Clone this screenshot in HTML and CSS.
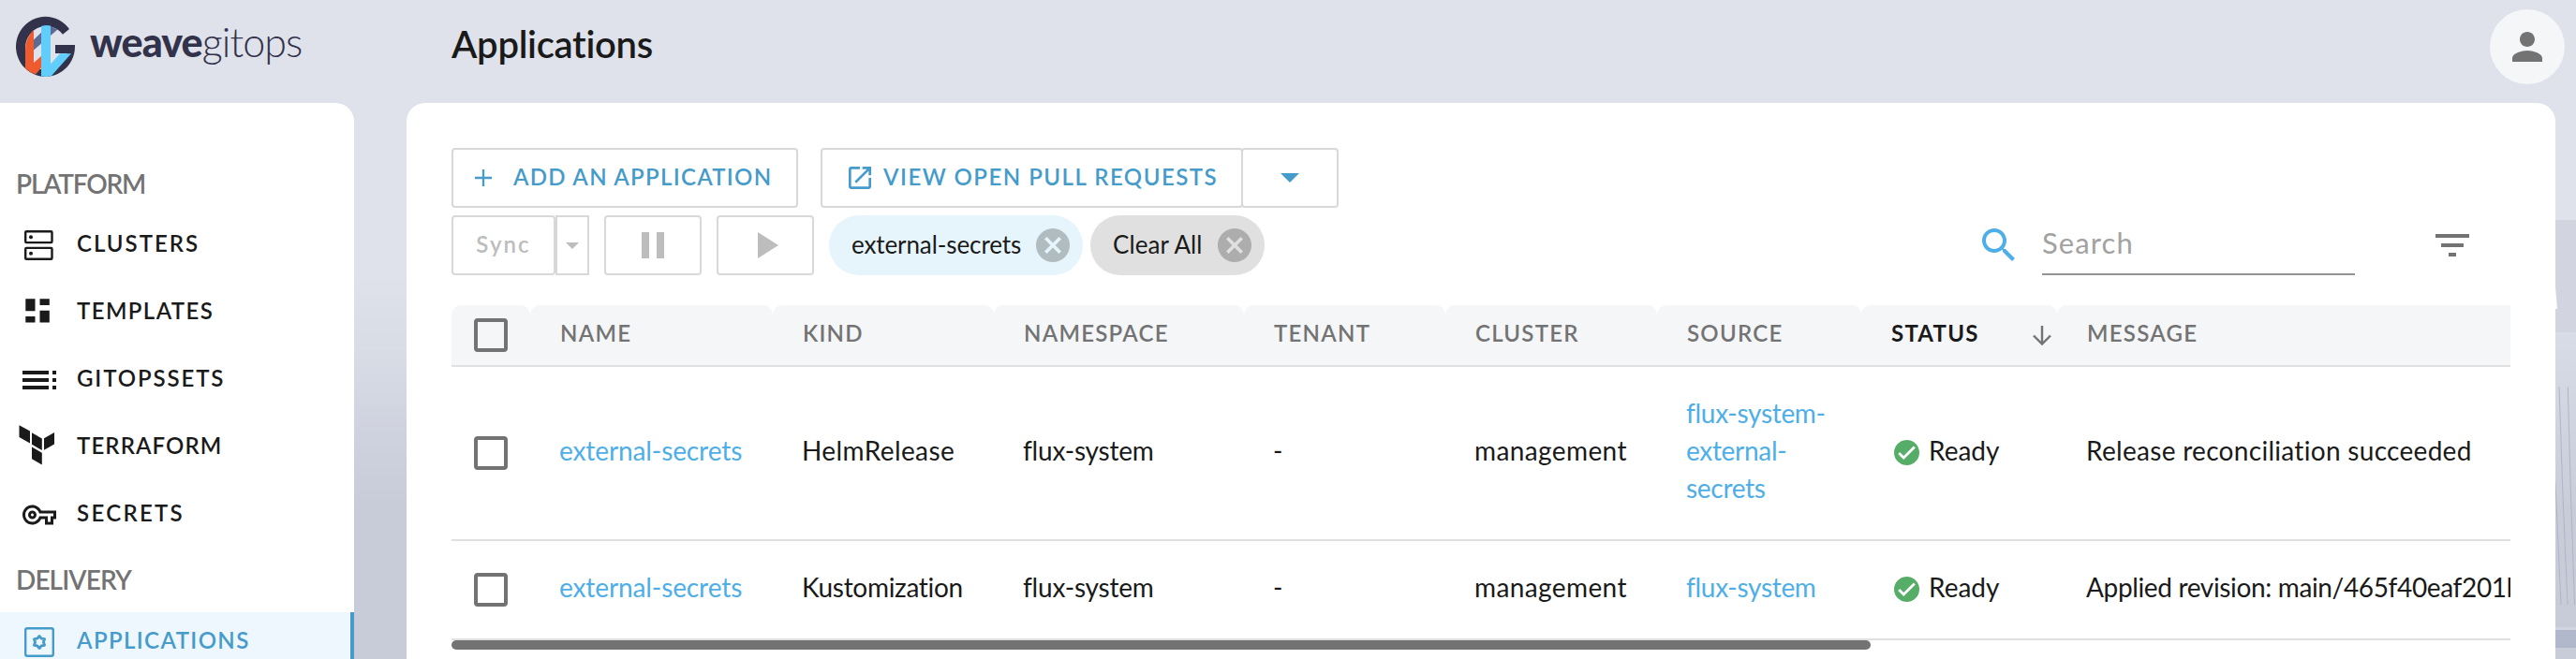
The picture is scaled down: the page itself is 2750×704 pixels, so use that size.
FILE: index.html
```html
<!DOCTYPE html>
<html lang="en">
<head>
<meta charset="utf-8">
<title>Weave GitOps - Applications</title>
<link rel="stylesheet" href="styles.css">
</head>
<body>
<svg class="backdrop" viewBox="0 0 24 704" aria-hidden="true">
  <defs>
    <linearGradient id="fade" x1="0" y1="0" x2="0" y2="1">
      <stop offset="0" stop-color="#d8dce6"/>
      <stop offset="1" stop-color="#c9cdda"/>
    </linearGradient>
  </defs>
  <rect x="0" y="235" width="24" height="120" fill="#d2d5e0"/>
  <rect x="0" y="355" width="24" height="185" fill="url(#fade)"/>
  <path d="M2 307 L4 330 L2 330Z" fill="#fff"/>
  <path d="M6 413 L10 530 15 646 M15.300 413 L18.500 530 22.500 646 M2 515 L8 646" stroke="#b0b5c6" fill="none"/>
  <rect x="0" y="670" width="24" height="4" fill="#d1d5df"/>
  <rect x="0" y="673" width="24" height="19" fill="#b2b8cb"/>
</svg>

<header class="topbar">
  <div class="brand">
    <svg class="brand-mark" viewBox="17 17 64 66">
      <path d="M74 31 A31.500 32 0 1 0 80 50 V48 H59 V57 H72 L54 74 H36 C29.500 67 27 60 27 50 A22.500 23.500 0 0 1 67 36.700Z" fill="#32324b"/>
      <path d="M36 32 C30 38 27 45 27 54 V73 Q31.500 77.500 38 79.500 L44 72.500 V60 L36 67Z" fill="#ef5b2f"/>
      <path d="M36 42.500 L51 28 Q57 28.500 61.500 31.500 L36 53.500Z" fill="#5d6b92"/>
      <path d="M44 28 Q49 26.500 54 27.500 V68.500 L64 57.300 H76 L54.500 81.600 Q49 82.200 44 81.500Z" fill="#60cdfb"/>
    </svg>
    <span class="brand-strong">weave</span><span class="brand-light">gitops</span>
  </div>
  <h1 class="page-title">Applications</h1>
  <button class="avatar" aria-label="Account">
    <svg viewBox="0 0 24 24"><path d="M12 12c2.210 0 4-1.790 4-4s-1.790-4-4-4-4 1.790-4 4 1.790 4 4 4zm0 2c-2.670 0-8 1.340-8 4v2h16v-2c0-2.660-5.330-4-8-4z"/></svg>
  </button>
</header>

<div class="shell">
  <nav class="sidebar">
    <h2 class="nav-heading">PLATFORM</h2>
    <ul class="nav-list">
      <li class="nav-item">
        <svg viewBox="0 0 48 48"><g fill="none" stroke="currentColor" stroke-width="2.400"><rect x="9.200" y="9.200" width="28.300" height="11.900" rx="1"/><rect x="9.200" y="26.900" width="28.300" height="11.900" rx="1"/></g><circle cx="15" cy="15.300" r="2" fill="currentColor"/><circle cx="15" cy="32.800" r="2" fill="currentColor"/></svg>
        <span class="nav-label nav-clusters">CLUSTERS</span>
      </li>
      <li class="nav-item">
        <svg viewBox="0 0 48 48" fill="currentColor"><path d="M9.300 9.300h10.200v13H9.300zM9.300 28h10.200v6.500H9.300zM24.500 9.300h10.300v6.700H24.500zM24.500 21.700h10.300v12.800H24.500z"/></svg>
        <span class="nav-label nav-templates">TEMPLATES</span>
      </li>
      <li class="nav-item">
        <svg viewBox="0 0 48 48" fill="currentColor"><path d="M6 14h28v4H6zM6 22h28v4H6zM6 30h28v4H6zM38 14h4v4h-4zM38 22h4v4h-4zM38 30h4v4h-4z"/></svg>
        <span class="nav-label nav-gitopssets">GITOPSSETS</span>
      </li>
      <li class="nav-item">
        <svg viewBox="0 0 48 48" fill="currentColor"><path d="M2.500 .300L14 6.600V19.500L2.500 13zM16 8.200L26.800 14.400V27L16 20.700zM29 14.300L40 8V20.500L29 26.700zM16 23.400L26.800 29.700V42.600L16 36.200z"/></svg>
        <span class="nav-label nav-terraform">TERRAFORM</span>
      </li>
      <li class="nav-item">
        <svg viewBox="0 0 48 48" fill="currentColor"><path transform="translate(6 6) scale(1.500)" d="M22 19h-6v-4h-2.680c-1.140 2.420-3.600 4-6.320 4-3.860 0-7-3.140-7-7s3.140-7 7-7c2.720 0 5.170 1.580 6.320 4H24v6h-2v4zm-4-2h2v-4h2v-2H11.940l-.230-.670C11.010 8.340 9.110 7 7 7c-2.760 0-5 2.240-5 5s2.240 5 5 5c2.110 0 4.010-1.340 4.710-3.330l.230-.670H18v4zM7 15c-1.650 0-3-1.350-3-3s1.350-3 3-3 3 1.350 3 3-1.350 3-3 3zm0-4c-.550 0-1 .450-1 1s.450 1 1 1 1-.450 1-1-.450-1-1-1z"/></svg>
        <span class="nav-label nav-secrets">SECRETS</span>
      </li>
    </ul>
    <h2 class="nav-heading nav-heading-delivery">DELIVERY</h2>
    <ul class="nav-list">
      <li class="nav-item nav-item-active">
        <svg viewBox="0 0 48 48" fill="none" stroke="currentColor"><rect x="9.200" y="9.200" width="29.600" height="29.600" rx="2" stroke-width="2.400"/><path d="M24 17.500L26.200 20.200 29.600 20.700 28.400 24 29.600 27.300 26.200 27.800 24 30.500 21.800 27.800 18.400 27.300 19.600 24 18.400 20.700 21.800 20.200z" stroke-width="2.800" stroke-linejoin="round"/></svg>
        <span class="nav-label nav-applications">APPLICATIONS</span>
      </li>
    </ul>
  </nav>

  <main class="panel">
    <div class="actions">
      <button class="btn btn-add">
        <svg class="icon-plus" viewBox="0 0 18 18"><path d="M9 0v18M0 9h18" stroke="currentColor" stroke-width="2.300"/></svg>
        <span class="text-add">ADD AN APPLICATION</span>
      </button>
      <div class="btn-group">
        <button class="btn btn-view">
          <svg class="icon-open" viewBox="3 3 18 18" fill="currentColor"><path d="M19 19H5V5h7V3H5c-1.110 0-2 .900-2 2v14c0 1.100.890 2 2 2h14c1.100 0 2-.900 2-2v-7h-2v7zM14 3v2h3.590l-9.830 9.830 1.410 1.410L19 6.410V10h2V3h-7z"/></svg>
          <span class="text-view">VIEW OPEN PULL REQUESTS</span>
        </button>
        <button class="btn btn-view-more" aria-label="More">
          <svg class="icon-caret" viewBox="0 0 20 10"><path d="M0 0h20L10 10z" fill="currentColor"/></svg>
        </button>
      </div>
    </div>

    <div class="filters">
      <div class="sync-group">
        <button class="btn btn-muted btn-sync"><span>Sync</span></button>
        <button class="btn btn-muted btn-sync-more" aria-label="Sync options"><svg viewBox="0 0 14 7"><path d="M0 0h14L7 7z" fill="currentColor"/></svg></button>
      </div>
      <button class="btn btn-muted btn-square" aria-label="Suspend"><svg viewBox="0 0 48 48" fill="currentColor"><path d="M12 10h8v28h-8zM28 10h8v28h-8z"/></svg></button>
      <button class="btn btn-muted btn-square" aria-label="Resume"><svg viewBox="0 0 48 48" fill="currentColor"><path d="M16 10v28l22-14z"/></svg></button>
      <div class="chips">
        <div class="chip chip-filter"><span class="text-chip-filter">external-secrets</span>
          <svg viewBox="2 2 20 20"><path d="M12 2C6.470 2 2 6.470 2 12s4.470 10 10 10 10-4.470 10-10S17.530 2 12 2zm5 13.590L15.590 17 12 13.410 8.410 17 7 15.590 10.590 12 7 8.410 8.410 7 12 10.590 15.590 7 17 8.410 13.410 12 17 15.590z"/></svg>
        </div>
        <div class="chip chip-clear"><span class="text-chip-clear">Clear All</span>
          <svg viewBox="2 2 20 20"><path d="M12 2C6.470 2 2 6.470 2 12s4.470 10 10 10 10-4.470 10-10S17.530 2 12 2zm5 13.590L15.590 17 12 13.410 8.410 17 7 15.590 10.590 12 7 8.410 8.410 7 12 10.590 15.590 7 17 8.410 13.410 12 17 15.590z"/></svg>
        </div>
      </div>
      <div class="search">
        <svg class="icon-search" viewBox="0 0 24 24"><path d="M15.500 14h-.790l-.280-.270C15.410 12.590 16 11.110 16 9.500 16 5.910 13.090 3 9.500 3S3 5.910 3 9.500 5.910 16 9.500 16c1.610 0 3.090-.590 4.230-1.570l.270.280v.790l5 4.990L20.490 19l-4.990-5zm-6 0C7.010 14 5 11.990 5 9.500S7.010 5 9.500 5 14 7.010 14 9.500 11.990 14 9.500 14z"/></svg>
        <div class="search-field">Search</div>
        <svg class="icon-filter" viewBox="0 0 24 24"><path d="M10 18h4v-2h-4v2zM3 6v2h18V6H3zm3 7h12v-2H6v2z"/></svg>
      </div>
    </div>

    <div class="table-scroll">
      <table class="grid">
        <colgroup><col class="c-check"><col class="c-name"><col class="c-kind"><col class="c-ns"><col class="c-tenant"><col class="c-cluster"><col class="c-source"><col class="c-status"><col class="c-message"></colgroup>
        <thead>
          <tr>
            <th><span class="checkbox"></span></th>
            <th>NAME</th>
            <th>KIND</th>
            <th>NAMESPACE</th>
            <th>TENANT</th>
            <th>CLUSTER</th>
            <th>SOURCE</th>
            <th class="sorted"><div class="sort"><span>STATUS</span><svg viewBox="0 0 20 21"><path d="M10 0v19M1 10.500l9 9 9-9" fill="none" stroke="#737373" stroke-width="2.400"/></svg></div></th>
            <th>MESSAGE</th>
          </tr>
        </thead>
        <tbody>
          <tr class="row-tall">
            <td><span class="checkbox"></span></td>
            <td class="link name">external-secrets</td>
            <td class="kind">HelmRelease</td>
            <td class="ns">flux-system</td>
            <td>-</td>
            <td class="cluster">management</td>
            <td class="link source">flux-system-<br>external-<br>secrets</td>
            <td><div class="status"><svg viewBox="0 0 27 27"><circle cx="13.500" cy="13.500" r="13.500" fill="#56ad68"/><path d="M5.200 14l5 5L21.800 7.500" fill="none" stroke="#fff" stroke-width="2.800"/></svg><span>Ready</span></div></td>
            <td class="message">Release reconciliation succeeded</td>
          </tr>
          <tr class="row-short">
            <td><span class="checkbox"></span></td>
            <td class="link name">external-secrets</td>
            <td class="kind-k">Kustomization</td>
            <td class="ns">flux-system</td>
            <td>-</td>
            <td class="cluster">management</td>
            <td class="link source">flux-system</td>
            <td><div class="status"><svg viewBox="0 0 27 27"><circle cx="13.500" cy="13.500" r="13.500" fill="#56ad68"/><path d="M5.200 14l5 5L21.800 7.500" fill="none" stroke="#fff" stroke-width="2.800"/></svg><span>Ready</span></div></td>
            <td class="message-applied">Applied revision: main/465f40eaf201b</td>
          </tr>
        </tbody>
      </table>
      <div class="scrollbar"></div>
    </div>
  </main>
</div>
</body>
</html>
```
FILE: styles.css
```css
* { box-sizing: border-box; }

body {
  margin: 0;
  height: 704px;
  overflow: hidden;
  position: relative;
  background: linear-gradient(#dfe2ea 0, #dfe2ea 290px, #d8dce5 380px, #cdd0dd 480px, #c8ccd9 540px);
  color: #1a1a1a;
  font-family: Lato, "Liberation Sans", sans-serif;
  font-variant-ligatures: none;
}

button { margin: 0; font: inherit; letter-spacing: inherit; }
svg { display: block; flex: none; }

.backdrop { position: absolute; right: 0; top: 0; width: 24px; height: 704px; z-index: -1; }

.topbar { display: flex; align-items: center; height: 110px; padding: 0 12px 10px 17px; }
.brand { display: flex; align-items: center; width: 465px; line-height: 60px; font-size: 43px; color: #32324b; }
.brand-mark { width: 64px; height: 66px; margin-right: 15px; }
.brand-strong { font-weight: 900; letter-spacing: -0.9px; padding-bottom: 11px; line-height: 47px; }
.brand-light { font-weight: 300; letter-spacing: -0.9px; padding-bottom: 11px; line-height: 47px; }
.page-title { flex: 1; margin: 0; padding-bottom: 7px; font-size: 40px; line-height: 48px; font-weight: 600; letter-spacing: -0.3px; }
.avatar { display: flex; align-items: center; justify-content: center; width: 80px; height: 80px; padding: 0; border: 0; border-radius: 50%; background: #f5f6f8; }
.avatar svg { width: 48px; height: 48px; fill: #737373; }

.shell { display: flex; height: 594px; }

.sidebar { width: 378px; padding-top: 66px; background: #fff; border-top-right-radius: 20px; overflow: hidden; }
.nav-heading { margin: 0 0 14px; padding-left: 17px; font-size: 28px; line-height: 40px; font-weight: 600; letter-spacing: -1.2px; color: #737373; }
.nav-heading-delivery { margin: 17px 0 15px; letter-spacing: -0.9px; }
.nav-list { display: flex; flex-direction: column; gap: 8px; margin: 0; padding: 0; list-style: none; }
.nav-item { display: flex; align-items: center; gap: 16px; height: 64px; padding-left: 18px; }
.nav-item svg { width: 48px; height: 48px; }
.nav-item-active { background: #eef6fe; border-right: 4px solid #459bca; color: #459bca; }
.nav-label { padding-bottom: 4px; font-size: 24px; line-height: 30px; font-weight: 600; }
.nav-clusters { letter-spacing: 2px; }
.nav-templates { letter-spacing: 1.4px; }
.nav-gitopssets { letter-spacing: 1.9px; }
.nav-terraform { letter-spacing: 1.1px; }
.nav-secrets { letter-spacing: 2.3px; }
.nav-applications { letter-spacing: 1.4px; }

.panel { display: flex; flex-direction: column; width: 2294px; margin-left: 56px; padding: 48px 48px 0; background: #fff; border-radius: 20px 20px 0 0; }

.actions { display: flex; gap: 24px; margin-bottom: 8px; }
.btn { display: flex; align-items: center; height: 64px; padding: 0; border: 2px solid #d8d8d8; border-radius: 4px; background: #fff; color: #459bca; font-size: 24px; line-height: 30px; font-weight: 600; white-space: nowrap; }
.btn span { padding-bottom: 3px; }
.btn-add { width: 370px; padding-left: 23px; }
.icon-plus { width: 18px; height: 18px; margin-right: 23px; }
.text-add { letter-spacing: 1.3px; }
.btn-group { display: flex; }
.btn-view { width: 451px; padding-left: 28px; }
.icon-open { width: 24px; height: 24px; margin-right: 13px; }
.text-view { letter-spacing: 1.5px; }
.btn-view-more { width: 104px; margin-left: -2px; justify-content: center; padding-left: 0; }
.icon-caret { width: 20px; height: 10px; }

.filters { display: flex; align-items: center; gap: 16px; height: 64px; }
.sync-group { display: flex; }
.btn-muted { color: #bdbdbd; justify-content: center; }
.btn-sync { width: 111px; letter-spacing: 2.1px; }
.btn-sync-more { width: 36px; border-radius: 0; }
.btn-sync-more svg { width: 14px; height: 7px; }
.btn-square { width: 104px; }
.btn-square svg { width: 48px; height: 48px; }

.chips { display: flex; gap: 8px; }
.chip { display: flex; align-items: center; height: 64px; padding-right: 14px; padding-left: 24px; border-radius: 32px; font-size: 26px; line-height: 32px; white-space: nowrap; justify-content: space-between; }
.chip span { padding-bottom: 3px; }
.chip-filter { width: 271px; background: #e6f5fb; }
.chip-clear { width: 186px; background: #e0e0e0; }
.chip svg { width: 36px; height: 36px; fill: rgba(26, 26, 26, 0.26); }
.text-chip-filter { letter-spacing: -0.1px; }
.text-chip-clear { letter-spacing: 0.1px; }

.search { display: flex; align-items: center; margin-left: auto; padding-right: 38px; }
.icon-search { width: 48px; height: 48px; fill: #4eaee8; }
.search-field { width: 334px; height: 64px; margin: 0 80px 0 22px; border-bottom: 2px solid #949494; font-size: 31px; line-height: 58px; letter-spacing: 1.1px; color: #a2a2a2; }
.icon-filter { width: 48px; height: 48px; fill: #737373; }

.table-scroll { margin-top: 32px; overflow: hidden; }
.grid { width: 3000px; table-layout: fixed; border-collapse: separate; border-spacing: 0; font-size: 28px; line-height: 40px; white-space: nowrap; }
.c-check { width: 84px; }
.c-name { width: 259px; }
.c-kind { width: 236px; }
.c-ns { width: 267px; }
.c-tenant { width: 215px; }
.c-cluster { width: 226px; }
.c-source { width: 218px; }
.c-status { width: 209px; }
.c-message { width: 1286px; }

.grid th { height: 66px; padding: 0 0 4px 32px; background: #f5f6f8; background-clip: padding-box; border-bottom: 2px solid #e0e0e0; border-radius: 10px 10px 0 0; text-align: left; font-size: 24px; line-height: 30px; font-weight: 600; letter-spacing: 1.25px; color: #737373; }
.grid th.sorted { color: #1a1a1a; font-weight: 700; }
.sort { display: flex; align-items: center; justify-content: space-between; padding-right: 6px; }
.sort svg { width: 20px; height: 21px; margin-top: 4px; }

.grid td { padding: 0 0 6px 31px; border-bottom: 2px solid #e0e0e0; }
.grid th:first-child, .grid td:first-child { padding: 0 0 0 24px; }
.row-tall td { height: 186px; }
.row-short td { height: 106px; }
.checkbox { display: block; width: 36px; height: 36px; border: 4px solid #737373; border-radius: 4px; }
.link { color: #4eaee8; }
.name { letter-spacing: -0.1px; }
.kind { letter-spacing: 0.4px; }
.kind-k { letter-spacing: -0.3px; }
.ns { letter-spacing: -0.2px; }
.source { letter-spacing: -0.3px; }
.cluster { letter-spacing: 0.4px; }
.message { letter-spacing: 0.3px; }
.message-applied { letter-spacing: -0.35px; }
.status { display: flex; align-items: center; gap: 10px; padding-left: 4px; }
.status svg { width: 27px; height: 27px; margin-top: 4px; }

.scrollbar { width: 1515px; height: 10px; border-radius: 5px; background: #737373; }
```
